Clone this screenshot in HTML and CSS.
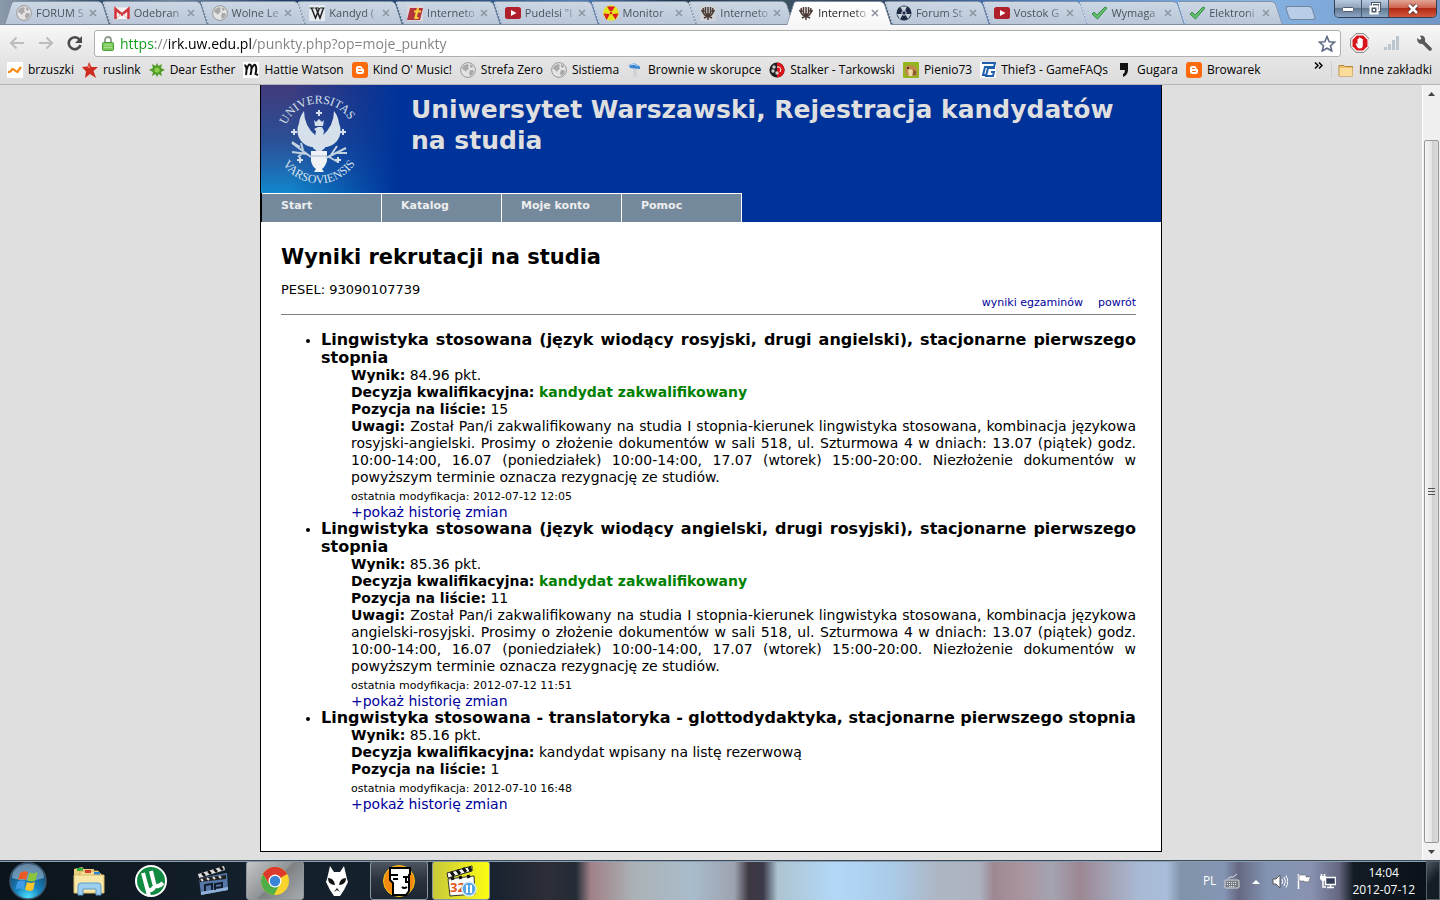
FILE: index.html
```html
<!DOCTYPE html>
<html lang="pl">
<head>
  <meta charset="UTF-8">
  <title>Internetowa Rejestracja Kandydatów</title>
  <link rel="stylesheet" href="styles.css">
</head>
<body>
  <!-- shared icons -->
  <svg class="defs" aria-hidden="true">
    <symbol id="i-globe" viewBox="0 0 16 16">
      <circle cx="8" cy="8" r="7.4" fill="#e4e4e4" stroke="#999"/>
      <path d="M3 4l4-2 2 1-1 2 1 2-2 1-1 2-2-2-2-1zM10 8l3 0 1 2-2 3-2 1-1-3zM10 2l3 2-1 2-2-1z" fill="#a9a9a9"/>
    </symbol>
    <symbol id="i-gmail" viewBox="0 0 16 16">
      <path d="M0 2.500h16v11.500H0z" fill="#f7f2f2"/>
      <path d="M1.500 14V4L8 9.500 14.500 4v10" fill="none" stroke="#d2363b" stroke-width="2.600"/>
      <path d="M3 13l4-4M13 13l-4-4" stroke="#d9b5b5"/>
    </symbol>
    <symbol id="i-wiki" viewBox="0 0 16 16">
      <path d="M0 0h16v16H0z" fill="#e6ebf0"/>
      <path d="M.5 3h5M6 3h4M11 3h4.500" stroke="#222"/>
      <path d="M2.500 3l4 10 4-10M7 3l4 10 3.500-10" fill="none" stroke="#222" stroke-width="1.500"/>
    </symbol>
    <symbol id="i-tee" viewBox="0 0 16 16">
      <path d="M0 0h16v16H0z" fill="#dfd6d8"/>
      <path d="M3 3h13l-3 12H0z" fill="#b3353c"/>
      <path d="M11 3L8.500 13h3M7 6.500h7" stroke="#fbd23c" stroke-width="2.200" fill="none"/>
    </symbol>
    <symbol id="i-yt" viewBox="0 0 16 16">
      <rect y="2" width="16" height="12" rx="2.500" fill="#b0202a"/>
      <path d="M6 5l5.500 3L6 11z" fill="#fff"/>
    </symbol>
    <symbol id="i-rad" viewBox="0 0 16 16">
      <circle cx="8" cy="8" r="7.800" fill="#e5e51e"/>
      <path d="M8 8L4 1.500h8zM7 9l-3.500 6L.5 8.500zM9 9l6.500-.5-3 6z" fill="#dc1c22"/>
      <circle cx="8" cy="8" r="2" fill="#e5e51e"/><circle cx="8" cy="8" r="1.200" fill="#dc1c22"/>
    </symbol>
    <symbol id="i-eagle" viewBox="0 0 16 16">
      <path d="M3 3l1 4M1.500 5l3 5 3 1M5.500 2v6M13 3l-1 4M14.500 5l-3 5-3 1M10.500 2v6M8 2v13M4 13l4-2 4 2M5 8l3 2 3-2" fill="none" stroke="#4b3a33" stroke-width="1.500"/>
    </symbol>
    <symbol id="i-stalker" viewBox="0 0 16 16">
      <circle cx="8" cy="8" r="7.500" fill="#1f2a44"/>
      <path d="M8 8L4 1.500h7zM7 9l-3 5.500L1 9zM9 9l6 0-3 5z" fill="#c9d4dc"/>
      <circle cx="8" cy="8" r="2.200" fill="#1f2a44" stroke="#dde"/>
    </symbol>
    <symbol id="i-check" viewBox="0 0 16 16">
      <path d="M1 9l2-2 3 3 8-8 2 1L6.500 14z" fill="#5fc06a" stroke="#3a8a48"/>
    </symbol>
    <symbol id="i-blogger" viewBox="0 0 16 16">
      <rect width="16" height="16" rx="3" fill="#ff6a0d"/>
      <path d="M6 4h2.500Q10.500 4 10.500 6.500 12 6.500 12 8v1.500Q12 12 9.500 12h-3Q4 12 4 9.500V6q0-2 2-2z" fill="#fff"/>
      <path d="M6.500 6.500h2M6.500 9.500h3" stroke="#ff6a0d" stroke-width="1.200" stroke-linecap="round"/>
    </symbol>
    <symbol id="i-x" viewBox="0 0 8 8">
      <path d="M1 1l6 6M7 1L1 7" stroke="#8c95a0" stroke-width="1.500"/>
    </symbol>
  </svg>

  <div class="tabstrip">
    <div class="tabs">
      <div class="tab first"><svg class="ico"><use href="#i-globe"/></svg><span>FORUM S</span><button aria-label="Zamknij"><svg><use href="#i-x"/></svg></button></div>
      <div class="tab"><svg class="ico"><use href="#i-gmail"/></svg><span>Odebran</span><button aria-label="Zamknij"><svg><use href="#i-x"/></svg></button></div>
      <div class="tab"><svg class="ico"><use href="#i-globe"/></svg><span>Wolne Le</span><button aria-label="Zamknij"><svg><use href="#i-x"/></svg></button></div>
      <div class="tab"><svg class="ico"><use href="#i-wiki"/></svg><span>Kandyd (</span><button aria-label="Zamknij"><svg><use href="#i-x"/></svg></button></div>
      <div class="tab"><svg class="ico"><use href="#i-tee"/></svg><span>Interneto</span><button aria-label="Zamknij"><svg><use href="#i-x"/></svg></button></div>
      <div class="tab"><svg class="ico"><use href="#i-yt"/></svg><span>Pudelsi "I</span><button aria-label="Zamknij"><svg><use href="#i-x"/></svg></button></div>
      <div class="tab"><svg class="ico"><use href="#i-rad"/></svg><span>Monitor</span><button aria-label="Zamknij"><svg><use href="#i-x"/></svg></button></div>
      <div class="tab"><svg class="ico pale"><use href="#i-eagle"/></svg><span>Interneto</span><button aria-label="Zamknij"><svg><use href="#i-x"/></svg></button></div>
      <div class="tab active"><svg class="ico"><use href="#i-eagle"/></svg><span>Interneto</span><button aria-label="Zamknij"><svg><use href="#i-x"/></svg></button></div>
      <div class="tab"><svg class="ico"><use href="#i-stalker"/></svg><span>Forum St</span><button aria-label="Zamknij"><svg><use href="#i-x"/></svg></button></div>
      <div class="tab"><svg class="ico"><use href="#i-yt"/></svg><span>Vostok G</span><button aria-label="Zamknij"><svg><use href="#i-x"/></svg></button></div>
      <div class="tab"><svg class="ico"><use href="#i-check"/></svg><span>Wymaga</span><button aria-label="Zamknij"><svg><use href="#i-x"/></svg></button></div>
      <div class="tab"><svg class="ico"><use href="#i-check"/></svg><span>Elektroni</span><button aria-label="Zamknij"><svg><use href="#i-x"/></svg></button></div>
    </div>
    <button class="new-tab" aria-label="Nowa karta"></button>
    <div class="win-buttons">
      <button class="min" aria-label="Minimalizuj"><svg width="14" height="8"><rect x="1.500" y="2.500" width="11" height="4" rx="1" fill="#fff" stroke="#555c6b"/></svg></button>
      <button class="max" aria-label="Przywróć"><svg width="14" height="13"><rect x="4.500" y="1.500" width="7" height="7" fill="none" stroke="#4f5869" stroke-width="3"/><rect x="4.500" y="1.500" width="7" height="7" fill="none" stroke="#fff"/><rect x="2.500" y="4.500" width="7" height="7" fill="#4f5869" stroke="#fff" stroke-width="2"/><rect x="5" y="7" width="2" height="2" fill="#fff"/></svg></button>
      <button class="close" aria-label="Zamknij okno"><svg width="14" height="12"><path d="M3 2l8 8M11 2l-8 8" stroke="#5b2a2a" stroke-width="4.500"/><path d="M3 2l8 8M11 2l-8 8" stroke="#fff" stroke-width="2.600"/></svg></button>
    </div>
  </div>

  <div class="toolbar">
    <button aria-label="Wstecz"><svg width="16" height="14"><path d="M15 7H2M7.500 1.500L2 7l5.500 5.500" fill="none" stroke="#bcbcbc" stroke-width="2"/></svg></button>
    <button aria-label="Dalej"><svg width="16" height="14"><path d="M1 7h13M8.500 1.500L14 7l-5.500 5.500" fill="none" stroke="#bcbcbc" stroke-width="2"/></svg></button>
    <button aria-label="Odśwież"><svg width="16" height="16"><path d="M12.500 4.500A6 6 0 1 0 13.500 10" fill="none" stroke="#4b4b4b" stroke-width="2.600"/><path d="M15 1v7H8z" fill="#4b4b4b"/></svg></button>
    <div class="omnibox">
      <svg width="12" height="15"><path d="M3 7V4a3 3 0 0 1 6 0v3" fill="none" stroke="#8f9b8f" stroke-width="1.800"/><rect x=".5" y="6.500" width="11" height="8" rx="1" fill="#7ccb5c" stroke="#4a9a38"/><path d="M2 9h8M2 11.500h8" stroke="#a9e08e"/></svg>
      <input type="text" aria-label="Adres" value="https://irk.uw.edu.pl/punkty.php?op=moje_punkty">
      <button aria-label="Dodaj zakładkę"><svg width="18" height="17"><path d="M9 1.500l2.200 5.200 5.500.4-4.200 3.600 1.300 5.300L9 13.200 4.200 16l1.300-5.300L1.300 7.100l5.500-.4z" fill="#fff" stroke="#5f6b85" stroke-width="1.600"/></svg></button>
    </div>
    <button class="ext" aria-label="Adblock"><svg width="20" height="20"><path d="M6 .7h8L19.300 6v8L14 19.300H6L.7 14V6z" fill="#fff" stroke="#777"/><path d="M6.700 2.500h6.600l4.200 4.200v6.600l-4.200 4.200H6.700l-4.200-4.200V6.700z" fill="#d8141c"/><path d="M6 10l1.500 1V6h1.300V4.500h1.300V5h1.400v1h1.300v6q0 3.500-3 3.500-2.500 0-4-4.500z" fill="#fff"/></svg></button>
    <button class="ext" aria-label="Statystyki"><svg width="16" height="16"><path d="M0 12h3v3H0zM4 9h3v6H4zM8 5h3v10H8zM12 1h3v14h-3z" fill="#bcc6cf"/></svg></button>
    <button class="ext" aria-label="Ustawienia"><svg width="16" height="16"><path d="M6 6l8 8" stroke="#5a5a5a" stroke-width="3.600" stroke-linecap="round"/><path d="M1 3l3 2 1.500-1.500L4 .7Q8 0 9 3.500T6 9Q1 9 1 3z" fill="#5a5a5a"/></svg></button>
  </div>

  <div class="bookmarks">
    <a href="#"><svg class="ico"><path d="M0 0h16v16H0z" fill="#fff"/><path d="M1 10q3 0 3.500-2T8 8.500 11 9l3-4" fill="none" stroke="#f58a12" stroke-width="2.200"/></svg>brzuszki</a>
    <a href="#"><svg class="ico"><path d="M7 0l2.500 5L16 5l-4.500 4L14 16l-6-4-5 4 1-6.500L0 5l5.500-.5z" fill="#cf2a20"/><path d="M7 2l1.500 4-3 0z" fill="#ee7060"/></svg>ruslink</a>
    <a href="#"><svg class="ico"><path d="M8 1l1.500 3L13 2l-1 4 4 2-4 2 1 4-3.500-2L8 15l-1.500-3L3 14l1-4-4-2 4-2-1-4 3.500 2z" fill="#4f9a24"/><circle cx="8" cy="8" r="2.600" fill="#8ad04c"/></svg>Dear Esther</a>
    <a href="#"><svg class="ico"><path d="M0 0h16v16H0z" fill="#fff"/><path d="M1.500 3q3 1 1.500 10M3.500 8q2-7 4-5t0 10M8 8q3-7 4.500-4.500T12.500 12l2.500 1" fill="none" stroke="#111" stroke-width="2"/></svg>Hattie Watson</a>
    <a href="#"><svg class="ico"><use href="#i-blogger"/></svg>Kind O' Music!</a>
    <a href="#"><svg class="ico"><use href="#i-globe"/></svg>Strefa Zero</a>
    <a href="#"><svg class="ico"><use href="#i-globe"/></svg>Sistiema</a>
    <a href="#"><svg class="ico"><path d="M6 6h4v9H6z" fill="#d0d4d8"/><path d="M2 3q6-4 11 2v2L3 6z" fill="#3a85d0"/><path d="M3 3q4-2 8 1" stroke="#bfe0fa" fill="none"/></svg>Brownie w skorupce</a>
    <a href="#"><svg class="ico"><circle cx="8" cy="8" r="7.600" fill="#222"/><path d="M8 .4a7.600 7.600 0 0 1 0 15.200z" fill="#d8161c"/><circle cx="5" cy="5" r="1.700" fill="#ccc"/><circle cx="4" cy="9" r="1.700" fill="#ccc"/><circle cx="8" cy="11" r="1.700" fill="#ccc"/><path d="M8 5h2q3 1 1 5" fill="none" stroke="#fff"/></svg>Stalker - Tarkowski</a>
    <a href="#"><svg class="ico"><rect width="16" height="16" rx="1" fill="#93b51f"/><path d="M2 7q0-4 5-4 6 0 7 5v6H5q-4-3-3-7z" fill="#c08a4a"/><path d="M5 8q3-2 5 1l-1 5H6z" fill="#f0d9a8"/><path d="M10 8l3 1v4h-3z" fill="#8a5a2c"/><circle cx="5" cy="6" r="1" fill="#222"/></svg>Pienio73</a>
    <a href="#"><svg class="ico"><path d="M0 0h16v16H0z" fill="#fff"/><path d="M2 1h13l-1 4H5L3 13h4M15 6H8L6 14h7l1-4h-3" fill="none" stroke="#1e5fae" stroke-width="2"/></svg>Thief3 - GameFAQs</a>
    <a href="#"><svg class="ico"><path d="M4 1h8v7q0 5-5 7V12q2-1 2-4H4z" fill="#111"/></svg>Gugara</a>
    <a href="#"><svg class="ico"><use href="#i-blogger"/></svg>Browarek</a>
    <button class="more" aria-label="Więcej zakładek"><svg width="9" height="7"><path d="M1 .5l3 3-3 3M5 .5l3 3-3 3" fill="none" stroke="#000" stroke-width="1.500"/></svg></button>
    <a href="#" class="other"><svg class="ico"><path d="M1 3.500h5l1 1h7.500v9.500H1z" fill="#f0c070" stroke="#b8863a"/><path d="M1.500 6h13v8h-13z" fill="#fbdc9a"/></svg>Inne zakładki</a>
  </div>

  <div class="viewport">
    <div class="canvas">
      <div class="page">
        <header class="banner">
          <svg class="emblem" viewBox="0 0 150 108" role="img" aria-label="Universitas Varsoviensis">
            <path id="arc-top" d="M25 40A36 36 0 0 1 94 55" fill="none"/>
            <path id="arc-bottom" d="M22 79A43 43 0 0 0 99 68" fill="none"/>
            <text class="emblem-text"><textPath href="#arc-top">UNIVERSITAS</textPath></text>
            <text class="emblem-text"><textPath href="#arc-bottom">VARSOVIENSIS</textPath></text>
            <!-- eagle -->
            <g fill="#d5e0ea">
              <path d="M43 26q0 15 12 25v11q-9 1-15-6-6-8-2-18 1-7 5-12z"/>
              <path d="M73 26q0 15-12 25v11q9 1 15-6 6-8 2-18-1-7-5-12z"/>
              <path d="M53 44l4-2h4l2 4-1 5q3 6 2 12l-6 5-6-5q-1-6 2-12l1-5z"/>
              <path d="M53 35l2 2 3-3 3 3 2-2-1 6h-8z"/>
              <path d="M50 66h16v10q-2 6-5 8l2 3H53l2-3q-4-3-5-8z" fill="#f0f3f6"/>
            </g>
            <path d="M58 25v6M55 28h6M33 44v6M30 47h6M82 44v6M79 47h6M39 72v6M36 75h6M77 72v6M74 75h6" stroke="#d5e0ea" stroke-width="2"/>
            <path d="M50 72L31 58M46 69l-15-2M42 65l-2-7M39 62l-8-5M43 67l-6 5M65 73l20-10M70 70l6-9M74 68l12 0M68 72l9 5" stroke="#c3d2df" stroke-width="2" fill="none"/>
            <path d="M50 71h16" stroke="#a5b9cd" fill="none"/>
          </svg>
          <h1>Uniwersytet Warszawski, Rejestracja kandydatów na studia</h1>
        </header>
        <nav class="menu">
          <a href="#">Start</a>
          <a href="#">Katalog</a>
          <a href="#">Moje konto</a>
          <a href="#">Pomoc</a>
        </nav>
        <main class="content">
          <h2>Wyniki rekrutacji na studia</h2>
          <p class="pesel">PESEL: 93090107739</p>
          <div class="links">
            <a href="#">wyniki egzaminów</a>
            <a href="#">powrót</a>
          </div>
          <ul class="results">
            <li>
              <h3>Lingwistyka stosowana (język wiodący rosyjski, drugi angielski), stacjonarne pierwszego stopnia</h3>
              <div class="details">
                <p><b>Wynik:</b> 84.96 pkt.</p>
                <p><b>Decyzja kwalifikacyjna:</b> <b class="ok">kandydat zakwalifikowany</b></p>
                <p><b>Pozycja na liście:</b> 15</p>
                <p><b>Uwagi:</b> Został Pan/i zakwalifikowany na studia I stopnia-kierunek lingwistyka stosowana, kombinacja językowa rosyjski-angielski. Prosimy o złożenie dokumentów w sali 518, ul. Szturmowa 4 w dniach: 13.07 (piątek) godz. 10:00-14:00, 16.07 (poniedziałek) 10:00-14:00, 17.07 (wtorek) 15:00-20:00. Niezłożenie dokumentów w powyższym terminie oznacza rezygnację ze studiów.</p>
                <p class="modified">ostatnia modyfikacja: 2012-07-12 12:05</p>
                <a href="#">+pokaż historię zmian</a>
              </div>
            </li>
            <li>
              <h3>Lingwistyka stosowana (język wiodący angielski, drugi rosyjski), stacjonarne pierwszego stopnia</h3>
              <div class="details">
                <p><b>Wynik:</b> 85.36 pkt.</p>
                <p><b>Decyzja kwalifikacyjna:</b> <b class="ok">kandydat zakwalifikowany</b></p>
                <p><b>Pozycja na liście:</b> 11</p>
                <p><b>Uwagi:</b> Został Pan/i zakwalifikowany na studia I stopnia-kierunek lingwistyka stosowana, kombinacja językowa angielski-rosyjski. Prosimy o złożenie dokumentów w sali 518, ul. Szturmowa 4 w dniach: 13.07 (piątek) godz. 10:00-14:00, 16.07 (poniedziałek) 10:00-14:00, 17.07 (wtorek) 15:00-20:00. Niezłożenie dokumentów w powyższym terminie oznacza rezygnację ze studiów.</p>
                <p class="modified">ostatnia modyfikacja: 2012-07-12 11:51</p>
                <a href="#">+pokaż historię zmian</a>
              </div>
            </li>
            <li>
              <h3>Lingwistyka stosowana - translatoryka - glottodydaktyka, stacjonarne pierwszego stopnia</h3>
              <div class="details">
                <p><b>Wynik:</b> 85.16 pkt.</p>
                <p><b>Decyzja kwalifikacyjna:</b> kandydat wpisany na listę rezerwową</p>
                <p><b>Pozycja na liście:</b> 1</p>
                <p class="modified">ostatnia modyfikacja: 2012-07-10 16:48</p>
                <a href="#">+pokaż historię zmian</a>
              </div>
            </li>
          </ul>
        </main>
      </div>
    </div>
    <div class="scrollbar">
      <button aria-label="W górę"><svg width="7" height="4"><path d="M0 4l3.500-4L7 4z" fill="#444"/></svg></button>
      <div class="track"><div class="thumb"><i></i><i></i><i></i></div></div>
      <button aria-label="W dół"><svg width="7" height="4"><path d="M0 0h7L3.500 4z" fill="#444"/></svg></button>
    </div>
  </div>

  <div class="taskbar">
    <button class="start" aria-label="Start">
      <svg width="38" height="38" viewBox="0 0 38 38">
        <defs>
          <radialGradient id="orb" cx=".5" cy=".95" r=".9"><stop offset="0" stop-color="#4fe0ff"/><stop offset=".4" stop-color="#1682bd"/><stop offset="1" stop-color="#1b3f66"/></radialGradient>
        </defs>
        <circle cx="19" cy="19" r="18" fill="url(#orb)" stroke="#3b566d" stroke-width="1.500"/>
        <path d="M3 16a16 14 0 0 1 32 0q-16 5-32 0z" fill="#c8dff0" opacity=".45"/>
        <path d="M11 11q4-3 8-1l-2 8q-4-2-8 0z" fill="#ee5a24"/>
        <path d="M20.500 10.500q4 2 8-.5l-2 8.500q-4 2-8 0z" fill="#8cc63a"/>
        <path d="M8.500 19.500q4-2 8 0l-2 8q-4-2-8 0z" fill="#3f9be6"/>
        <path d="M18 20q4 2 8 0l-2 8q-4 2-8-.5z" fill="#fcc52a"/>
      </svg>
    </button>
    <button aria-label="Eksplorator">
      <svg width="34" height="32" viewBox="0 0 34 32">
        <path d="M2 4l8-2 2 2h10v24H2z" fill="#ecd07c"/><path d="M5 3h6v3H5z" fill="#2fae3a"/>
        <path d="M8 6h18l3 3v18H8z" fill="#f4dd90" stroke="#c9a85a"/><path d="M13 5h6v3h-6z" fill="#d2402f"/><path d="M22 7h6v3h-6z" fill="#2f86d0"/>
        <path d="M2 10h30v18H2z" fill="#f9e7a8" stroke="#d8ba6a"/>
        <path d="M6 30v-9q0-3 3-3h17q3 0 3 3v9h-5v-6H11v6z" fill="#9ccff0" stroke="#5c9cc8"/>
      </svg>
    </button>
    <button aria-label="uTorrent">
      <svg width="34" height="34" viewBox="0 0 34 34">
        <circle cx="17" cy="17" r="15" fill="#118a42" stroke="#fff" stroke-width="2"/>
        <path d="M9 9l4 15q1 3 4 2 3-1 3-4M17 7l3 12q1 4 4 3t5-3M12 20l3 12" stroke="#fff" stroke-width="4" fill="none"/>
      </svg>
    </button>
    <button aria-label="Napi Projekt">
      <svg width="34" height="32" viewBox="0 0 34 32">
        <path d="M3 13l28-5 1 17-27 5z" fill="#5477a8"/><path d="M5 27l27-5v3L5 30z" fill="#8fb0d8"/>
        <path d="M2 9L28 1l1 4L3 13z" fill="#ddd"/><path d="M3 13l27-3v4L4 17z" fill="#222"/>
        <path d="M6 8l3 3M12 6l3 3M18 4l3 3M24 2l3 3" stroke="#111" stroke-width="2.500"/><path d="M5 14l2 2M11 13l2 2M17 12l2 2M23 11l2 2" stroke="#ddd" stroke-width="2"/>
        <path d="M9 26v-6l7-1v6M19 25v-6l7-1v4l-7 1" fill="none" stroke="#131c2a" stroke-width="2"/>
      </svg>
    </button>
    <button class="open chrome" aria-label="Chrome">
      <svg width="30" height="30" viewBox="0 0 30 30">
        <circle cx="15" cy="15" r="14" fill="#f9d42f"/>
        <path d="M15 15L2.900 8A14 14 0 0 1 27.100 8z" fill="#dd3a2c"/><path d="M15 8h12.100A14 14 0 0 0 2.900 8L9 18z" fill="#dd3a2c"/>
        <path d="M2.900 8a14 14 0 0 0 11 21l6-11-5-3-6 3z" fill="#4fae48"/>
        <circle cx="15" cy="15" r="6.500" fill="#fff"/><circle cx="15" cy="15" r="5.200" fill="#3b83d4"/>
      </svg>
    </button>
    <button aria-label="foobar2000">
      <svg width="26" height="32" viewBox="0 0 26 32">
        <path d="M6 1l4 6h6l4-6 3 13 1 3-4 8-4 6h-6l-4-6-4-8 1-3z" fill="#fff"/>
        <path d="M4 13q6 0 7 7-7 0-7-7zM22 13q-6 0-7 7 7 0 7-7z" fill="#111"/><path d="M10 27l3-4 3 4-3-2z" fill="#111"/>
      </svg>
    </button>
    <button class="open" aria-label="FJ">
      <svg width="34" height="34" viewBox="0 0 34 34">
        <circle cx="17" cy="17" r="15.500" fill="#f58a12" stroke="#f8c512"/>
        <path d="M8 4h20v6l-1 1v16l-3 4H11V19l-3-3z" fill="#fff" stroke="#000" stroke-width="2"/>
        <path d="M8 11h8M11 15h5M21 13h5M20 23q2 2 5 0M24 14v4h3" fill="none" stroke="#000" stroke-width="2"/>
      </svg>
    </button>
    <button class="open yellow" aria-label="ALLPlayer">
      <svg width="32" height="32" viewBox="0 0 32 32">
        <path d="M3 14l26-3 1 18-25 2z" fill="#fff" stroke="#333"/>
        <path d="M2 8L27 1v5L3 13z" fill="#fff" stroke="#222"/><path d="M6 7l3 4M12 5l3 4M18 3l3 4M24 2l2 4M6 14l3-1M14 13l3-1M22 12l3-1" stroke="#111" stroke-width="3"/>
        <text x="5" y="27" class="count">32</text>
        <circle cx="24" cy="24" r="7" fill="#5aa6e4" stroke="#d6ecfb" stroke-width="1.500"/><path d="M22 20v8M26 20v8" stroke="#fff" stroke-width="2"/>
      </svg>
    </button>
    <div class="tray">
      <span class="lang">PL</span>
      <svg width="16" height="16"><rect x="1" y="7" width="14" height="8" rx="1" fill="#777e88" stroke="#d9d9d9"/><path d="M3 9.500h10M3 11.500h10M5 13.500h6" stroke="#e6e6e6" stroke-dasharray="1 1"/><path d="M4 6q1-3 5-2l4-3" fill="none" stroke="#ddd"/></svg>
      <svg width="16" height="16"><path d="M4 11l4-4 4 4z" fill="#fff"/></svg>
      <svg width="16" height="16"><path d="M1 6h3l4-4v13l-4-4H1z" fill="#fff" stroke="#555"/><path d="M10 6q1.500 2.500 0 5M12 4q3 4 0 9M14 2.500q3.500 6 0 12" stroke="#fff" fill="none"/></svg>
      <svg width="16" height="16"><path d="M2.500 1v15" stroke="#fff" stroke-width="1.500"/><path d="M3 2h7v2h5l-2 3 1 1.500-5 .5-1-1H3z" fill="#fff" stroke="#555" stroke-width=".5"/></svg>
      <svg width="16" height="16"><rect x="5.500" y="4.500" width="10" height="7" fill="#34405a" stroke="#fff" stroke-width="1.500"/><path d="M7 14.500h7M10.500 12v3M3 7v7h3M1.500 1v3M4.500 1v3" stroke="#fff" stroke-width="1.500" fill="none"/><path d="M0 3h6v3L4 8H2L0 6z" fill="#fff"/></svg>
      <div class="clock"><span>14:04</span><span>2012-07-12</span></div>
    </div>
    <button class="show-desktop" aria-label="Pokaż pulpit"></button>
  </div>
</body>
</html>
```
FILE: styles.css
```css
* {
  box-sizing: border-box;
}

body {
  margin: 0;
  height: 100vh;
  display: flex;
  flex-direction: column;
  overflow: hidden;
  font-family: "Open Sans", "Segoe UI", sans-serif;
  font-size: 12px;
  background: #dfdfdf;
}

button {
  border: none;
  background: none;
  padding: 0;
  display: flex;
  align-items: center;
  justify-content: center;
}

a {
  color: #00009c;
  text-decoration: none;
}

svg {
  display: block;
}

.defs {
  position: absolute;
  width: 0;
  height: 0;
}

.ico {
  width: 16px;
  height: 16px;
  flex: none;
}

/* tabs */
.tabstrip {
  display: flex;
  height: 25px;
  flex: none;
  padding: 0 3px 0 8px;
  border-bottom: 1px solid #7d8ea3;
  background: linear-gradient(to right, #8b9aab 0, #34506e 7%, #7088a4 12%, #1c3c66 20%, #284c78 32%, #4f7fc0 40%, #23364c 47%, #3c5364 54%, #35465a 60%, #3f68a8 68%, #5d92d8 77%, #86b4e4 87%, #7fa9d8 92%, #6f96c4 100%);
}

.tabs {
  display: flex;
  flex: 1;
  min-width: 0;
  padding-top: 1px;
}

.tab {
  position: relative;
  flex: 1 1 0;
  min-width: 0;
  display: flex;
  align-items: center;
  padding: 0 9px 0 8px;
  font-size: 11px;
  color: #4b535c;
}

.tab::before,
.tab.first::after,
.tab.active::after {
  content: "";
  position: absolute;
  inset: 0;
  background: linear-gradient(#ccd7e4, #bac7d9);
  border: 1px solid #8391a4;
  border-bottom: none;
  border-left-color: #e0e8f0;
  border-radius: 3px 5px 0 0;
  transform: skewX(18deg);
}

/* slanted outwards on both sides: two overlapping halves */
.tab.first::before,
.tab.active::before {
  left: 35%;
  border-left: none;
  border-top-left-radius: 0;
}

.tab.first::after,
.tab.active::after {
  right: 35%;
  border-right: none;
  border-left-color: #8391a4;
  border-top-right-radius: 0;
  transform: skewX(-18deg);
}

.tab > * {
  position: relative;
  z-index: 1;
}

.tab span {
  flex: 1;
  padding-left: 4px;
  overflow: hidden;
  white-space: nowrap;
  mask-image: linear-gradient(to right, #000 70%, transparent);
}

.tab button {
  width: 8px;
  height: 8px;
}

.tab button svg {
  width: 8px;
  height: 8px;
}

.tab.active {
  z-index: 2;
  color: #222;
}

.tab.active::before,
.tab.active::after {
  bottom: -1px;
  background: linear-gradient(#fff, #f7f7f7);
}

.pale {
  background: #cfd4d8;
}

.new-tab {
  flex: none;
  width: 27px;
  height: 14px;
  margin: 6px 20px 0 8px;
  background: #b9cde6;
  border: 1px solid #6f86a3;
  border-radius: 3px;
  transform: skewX(18deg);
}

.win-buttons {
  display: flex;
  flex: none;
  height: 18px;
  border: 1px solid #333e50;
  border-top: none;
  border-radius: 0 0 5px 5px;
  overflow: hidden;
}

.win-buttons button {
  width: 27px;
  border-right: 1px solid #46566c;
  background: linear-gradient(#b9cbe0, #8fa3bb 45%, #64788f 50%, #8ba6c6);
}

.win-buttons .close {
  width: 47px;
  border-right: none;
  background: linear-gradient(#e2a595, #cf6450 45%, #b02a14 50%, #d4583c);
}

/* toolbar */
.toolbar {
  display: flex;
  align-items: center;
  height: 33px;
  flex: none;
  padding: 3px 7px 0 9px;
  gap: 13px;
  background: linear-gradient(#f7f7f7, #e6e6e6);
}

.omnibox {
  flex: 1;
  display: flex;
  align-items: center;
  gap: 6px;
  height: 27px;
  margin-left: -2px;
  margin-right: -4px;
  padding: 0 4px 0 7px;
  background: #fff;
  border: 1px solid #b0b0b0;
  border-radius: 3px;
}

.omnibox input {
  flex: 1;
  min-width: 0;
  border: none;
  outline: none;
  padding: 0;
  font-family: inherit;
  font-size: 14px;
  color: transparent;
  background: linear-gradient(to right, #0a9a14 34px, #808080 34px, #808080 48px, #000 48px, #000 131px, #808080 131px);
  -webkit-background-clip: text;
  background-clip: text;
}

.ext {
  width: 19px;
}

/* bookmarks bar */
.bookmarks {
  display: flex;
  align-items: center;
  gap: 8px;
  height: 28px;
  flex: none;
  margin-top: -1px;
  padding: 0 8px 2px 7px;
  border-bottom: 1px solid #b3b3b8;
  background: linear-gradient(#e6e6e6, #dcdcdc);
}

.bookmarks a {
  display: flex;
  align-items: center;
  gap: 5px;
  color: #000;
  white-space: nowrap;
}

.bookmarks .more {
  margin-left: auto;
  margin-bottom: 8px;
}

.bookmarks .other {
  padding-left: 6px;
  border-left: 1px solid #c9d0d8;
}

/* page */
.viewport {
  flex: 1;
  min-height: 0;
  display: flex;
}

.canvas {
  flex: 1;
  padding-bottom: 8px;
  overflow: hidden;
  font-family: Verdana, "DejaVu Sans", sans-serif;
}

.page {
  max-width: 902px;
  height: 100%;
  margin: 0 auto;
  border: 1px solid #000;
  border-top: none;
  background: #fff;
}

.banner {
  display: flex;
  height: 108px;
  padding-right: 25px;
  background: #003399;
}

.emblem {
  width: 150px;
  height: 108px;
  flex: none;
  background: linear-gradient(to right, transparent 20%, #003399 90%), linear-gradient(#403a7c, #2b4f95 50%, #2068b0 76%, #1088cc);
}

.emblem-text {
  font-family: "Liberation Serif", serif;
  font-size: 12px;
  fill: #d5e0ea;
}

.banner h1 {
  margin: 9px 0 0;
  font-size: 25px;
  line-height: 31px;
  color: #dfdfdf;
}

.menu {
  display: flex;
  height: 29px;
  border-left: 1px solid #000;
  background: #003399;
}

.menu a {
  width: 120px;
  padding: 5px 0 0 19px;
  border-top: 1px solid #fff;
  border-right: 1px solid #fff;
  background: #74899c;
  color: #eee;
  font-size: 11px;
  font-weight: bold;
}

.content {
  padding: 21px 25px 41px 20px;
}

.content h2 {
  margin: 0;
  font-size: 21px;
  line-height: 28px;
}

.content p {
  margin: 0;
}

.content .pesel {
  margin-top: 11px;
  font-size: 13px;
  line-height: 15px;
}

.links {
  display: flex;
  justify-content: flex-end;
  gap: 15px;
  padding-bottom: 5px;
  border-bottom: 1px solid #808080;
  font-size: 11px;
  line-height: 12px;
}

.results {
  margin: 16px 0 0;
  padding-left: 40px;
  font-size: 14px;
  line-height: 17px;
  text-align: justify;
}

.results h3 {
  margin: 0;
  font-size: 16px;
  line-height: 18px;
}

.details {
  padding-left: 30px;
}

.details .modified {
  padding-top: 4px;
  font-size: 11px;
  line-height: 14px;
}

.details a {
  display: block;
  line-height: 16px;
}

.ok {
  color: #008000;
}

/* scrollbar */
.scrollbar {
  width: 18px;
  display: flex;
  flex-direction: column;
  background: #f0f0f0;
  border-left: 1px solid #fff;
}

.scrollbar button {
  height: 17px;
}

.track {
  flex: 1;
  padding-top: 38px;
}

.thumb {
  height: 100%;
  display: flex;
  flex-direction: column;
  justify-content: center;
  align-items: center;
  gap: 2px;
  margin: 0 1px;
  border: 1px solid #979797;
  border-radius: 2px;
  background: linear-gradient(to right, #f5f5f5, #e6e6e6 50%, #cfcfcf 51%, #dcdcdc);
}

.thumb i {
  width: 7px;
  height: 1px;
  background: #555;
}

/* taskbar */
.taskbar {
  display: flex;
  gap: 4px;
  height: 40px;
  flex: none;
  border-top: 1px solid #3d4c5c;
  box-shadow: inset 0 1px #8c9dae;
  background: linear-gradient(to right, #0b141c 0, #131f2a 17%, #16222e 34%, #2d2d38 38%, #232c36 40%, #a08087 41%, #abb2b6 44%, #a9bccb 48%, #9da2b0 51%, #3f3842 52%, #3b3a4a 53%, #adc4d0 54%, #b3d8f8 58%, #a9cbe8 62%, #aeb6c4 65%, #adb3c1 68%, #9d8792 69%, #a995a0 71%, #a5a3b1 73%, #9d8793 75%, #a3a2b4 77%, #a8b9d3 79%, #a9bedb 81%, #8193a9 82%, #8496b4 85%, #666882 86%, #8294b2 88%, #8993b1 91%, #65677f 93%, #131b24 94%, #080f16 100%);
}

.taskbar button {
  width: 58px;
}

.taskbar .start {
  width: 56px;
}

.taskbar .open {
  border: 1px solid #8b959e;
  border-radius: 3px;
  background: linear-gradient(#4c5560, #29323d 50%, #1c2530);
}

.taskbar .chrome {
  background: linear-gradient(135deg, #c4c6c8, #909396 50%, #7d8184 51%, #a9abad);
}

.taskbar .yellow {
  background: linear-gradient(to right, #c9c93a, #f2f21c 80%, #fdfd10);
}

.count {
  font-family: "Open Sans", sans-serif;
  font-size: 13px;
  font-weight: bold;
  fill: #e0521c;
}

.tray {
  display: flex;
  align-items: center;
  gap: 8px;
  margin-left: auto;
  color: #fff;
}

.clock {
  display: flex;
  flex-direction: column;
  align-items: center;
  padding: 0 7px 0 8px;
  line-height: 17px;
}

.taskbar .show-desktop {
  width: 14px;
  border: 1px solid #56616b;
  background: linear-gradient(135deg, #4c565f, #141c24 50%);
}
```
